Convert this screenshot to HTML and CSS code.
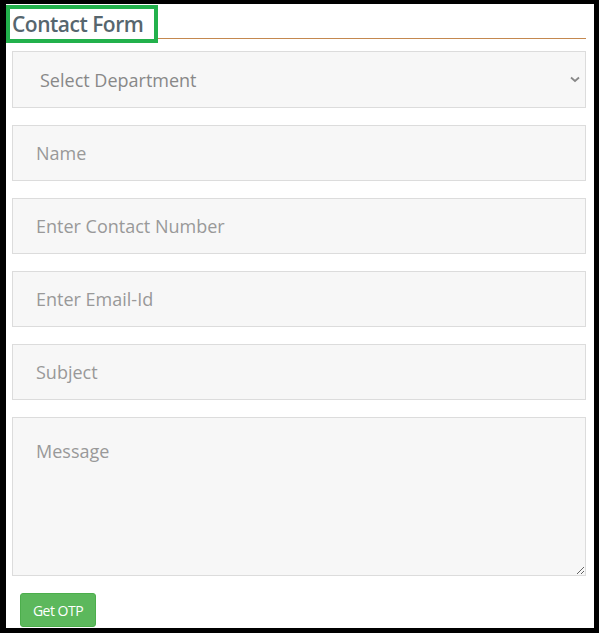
FILE: index.html
```html
<!DOCTYPE html>
<html>
<head>
<meta charset="utf-8">
<link rel="stylesheet" href="styles.css">
</head>
<body>
<div class="frame">
  <div class="title-row">
    <h2 class="title">Contact Form</h2>
    <div class="rule"></div>
  </div>
  <form class="form">
    <div class="select-wrap">
      <select class="field select">
        <option>Select Department</option>
      </select>
      <svg class="chev" width="10" height="7" viewBox="0 0 10 7"><path d="M1 1.5 L5 5 L9 1.5" fill="none" stroke="#888" stroke-width="1.8"/></svg>
    </div>
    <input class="field" type="text" placeholder="Name">
    <input class="field" type="text" placeholder="Enter Contact Number">
    <input class="field" type="text" placeholder="Enter Email-Id">
    <input class="field" type="text" placeholder="Subject">
    <textarea class="field area" placeholder="Message"></textarea>
    <div class="actions"><button type="button" class="btn">Get OTP</button></div>
  </form>
</div>
</body>
</html>
```
FILE: styles.css
```css
html, body {
  margin: 0;
  padding: 0;
  background: #000;
}
.frame {
  box-sizing: border-box;
  width: 599px;
  height: 633px;
  border-style: solid;
  border-color: #000;
  border-width: 4px 5px 5px 6px;
  background: #fff;
  overflow: hidden;
  font-family: "Open Sans", "Liberation Sans", sans-serif;
}
.title-row {
  display: flex;
  align-items: flex-start;
  margin: 1px 8px 0 0;
}
.title {
  box-sizing: border-box;
  margin: 0;
  height: 38px;
  width: 152px;
  border: 4px solid #22b14c;
  padding: 1px 0 0 2px;
  font-size: 21px;
  font-weight: 600;
  line-height: 28px;
  color: #56666e;
  letter-spacing: -0.5px;
  white-space: nowrap;
}
.rule {
  flex: 1;
  height: 33px;
  border-bottom: 1px solid #c4884f;
}
.form {
  display: flex;
  flex-direction: column;
  gap: 17px;
  margin: 8px 8px 0 6px;
}
.field {
  box-sizing: border-box;
  width: 100%;
  height: 56px;
  margin: 0;
  border: 1px solid #dcdcdc;
  background: #f7f7f7;
  padding: 0 0 0 23px;
  font-family: "Open Sans", "Liberation Sans", sans-serif;
  font-size: 18px;
  color: #888;
  border-radius: 0;
  outline: none;
}
.field::placeholder {
  color: #999;
}
.select-wrap {
  position: relative;
}
.select {
  appearance: none;
  -webkit-appearance: none;
  padding-left: 27px;
  height: 57px;
  color: #888;
}
.chev {
  position: absolute;
  right: 6px;
  top: 25px;
}
.area {
  height: 159px;
  padding-top: 21px;
  resize: vertical;
  display: block;
}
.actions {
  padding-left: 8px;
}
.btn {
  width: 76px;
  height: 34px;
  background: #5cb85c;
  color: #fff;
  border: 1px solid #4cae4c;
  border-radius: 3px;
  font-family: "Open Sans", "Liberation Sans", sans-serif;
  font-size: 14px;
  padding: 0;
  letter-spacing: -0.5px;
}
```
